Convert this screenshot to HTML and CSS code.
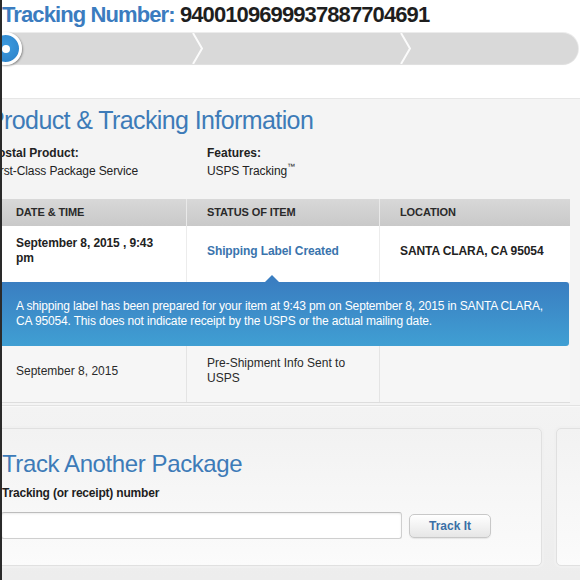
FILE: index.html
```html
<!DOCTYPE html>
<html lang="en">
<head>
<meta charset="utf-8">
<title>USPS Tracking</title>
<link rel="stylesheet" href="styles.css">
</head>
<body>
<div class="page">
  <h1 class="track-head"><span class="track-lbl">Tracking Number:</span> <span class="track-num">9400109699937887704691</span></h1>

  <div class="progress">
    <span class="dot"><span class="dot-core"></span></span>
    <span class="seg seg1"></span>
    <svg class="chev" viewBox="0 0 12 31" width="12" height="31"><polyline points="1,0 10,15.5 1,31" fill="none" stroke="#ffffff" stroke-width="2"/></svg>
    <span class="seg seg2"></span>
    <svg class="chev" viewBox="0 0 12 31" width="12" height="31"><polyline points="1,0 10,15.5 1,31" fill="none" stroke="#ffffff" stroke-width="2"/></svg>
    <span class="seg seg3"></span>
  </div>

  <section class="info">
    <h2 class="info-title">Product &amp; Tracking Information</h2>
    <div class="meta">
      <div class="meta-col meta-product">
        <div class="meta-label">Postal Product:</div>
        <div class="meta-value">First-Class Package Service</div>
      </div>
      <div class="meta-col">
        <div class="meta-label">Features:</div>
        <div class="meta-value">USPS Tracking<sup class="tm">™</sup></div>
      </div>
    </div>

    <div class="table">
      <div class="th">DATE &amp; TIME</div>
      <div class="th">STATUS OF ITEM</div>
      <div class="th">LOCATION</div>

      <div class="td td-strong row1">September 8, 2015 , 9:43 pm</div>
      <div class="td td-strong td-status row1">Shipping Label Created</div>
      <div class="td td-strong row1">SANTA CLARA, CA 95054</div>

      <div class="note">A shipping label has been prepared for your item at 9:43 pm on September 8, 2015 in SANTA CLARA, CA 95054. This does not indicate receipt by the USPS or the actual mailing date.</div>

      <div class="td row2">September 8, 2015</div>
      <div class="td row2">Pre-Shipment Info Sent to USPS</div>
      <div class="td row2"></div>
    </div>
  </section>

  <section class="another">
    <div class="card">
      <h2 class="card-title">Track Another Package</h2>
      <label class="card-label" for="tn">Tracking (or receipt) number</label>
      <div class="form-row">
        <input id="tn" class="tn-input" type="text">
        <button class="track-btn" type="button">Track It</button>
      </div>
    </div>
    <div class="card card-side"></div>
  </section>
</div>
</body>
</html>
```

FILE: styles.css
```css
html, body {
  margin: 0;
  padding: 0;
  background: #ffffff;
}

body {
  font-family: "Liberation Sans", Arial, sans-serif;
  color: #222222;
}

.page {
  border-left: 2px solid #2a2a2a;
  width: 578px;
  height: 580px;
  overflow: hidden;
  background: #ffffff;
}

/* ---------- header ---------- */
.track-head {
  margin: 0;
  padding: 1px 0 0 0;
  height: 32px;
  box-sizing: border-box;
  font-size: 22px;
  line-height: 28px;
  font-weight: bold;
  letter-spacing: -0.9px;
  white-space: nowrap;
}

.track-lbl {
  color: #3b7cbf;
}

.track-num {
  color: #1e1e1e;
}

/* ---------- progress bar ---------- */
.progress {
  display: flex;
  align-items: center;
  height: 31px;
  margin: 1px 2px 0 0;
  background: #d9d9d9;
  border-radius: 0 16px 16px 0;
  box-shadow: 0 1px 1px rgba(0, 0, 0, 0.06), 0 0 0 1px #ececec;
}

.dot {
  flex: none;
  width: 27px;
  height: 27px;
  margin-left: -13px;
  border: 3px solid #ffffff;
  border-radius: 50%;
  background: radial-gradient(circle at 50% 40%, #3c9be0, #2a7fc6);
  box-shadow: 1px 1px 2px rgba(0, 0, 0, 0.35);
  display: flex;
  align-items: center;
  justify-content: center;
}

.dot-core {
  width: 8px;
  height: 8px;
  border-radius: 50%;
  background: #ffffff;
}

.seg {
  height: 100%;
}

.seg1 {
  width: 170px;
}

.seg2 {
  width: 196px;
}

.seg3 {
  flex: 1;
}

.chev {
  flex: none;
  display: block;
  opacity: 0.9;
}

/* ---------- info section ---------- */
.info {
  margin-top: 34px;
  border-top: 1px solid #e6e6e6;
  background: #f4f4f4;
  padding: 6px 0 3px;
  border-bottom: 1px solid #e2e2e2;
}

.info-title {
  margin: 0 0 9px -14px;
  font-size: 25px;
  line-height: 30px;
  font-weight: normal;
  letter-spacing: -0.6px;
  color: #3d7bb8;
  white-space: nowrap;
}

.meta {
  display: flex;
  margin-left: -12px;
  font-size: 12px;
  line-height: 18px;
  color: #222222;
}

.meta-col.meta-product {
  width: 217px;
}

.meta-label {
  font-weight: bold;
}

.meta-value {
  letter-spacing: -0.1px;
}

.tm {
  font-size: 8px;
  line-height: 0;
  vertical-align: 6px;
}

/* ---------- table ---------- */
.table {
  display: grid;
  grid-template-columns: 190px 193px 191px;
  margin: 19px 0 0 -6px;
  width: 574px;
  font-size: 12px;
  line-height: 15px;
}

.th {
  height: 27px;
  box-sizing: border-box;
  padding: 0 20px;
  display: flex;
  align-items: center;
  font-size: 11px;
  font-weight: bold;
  letter-spacing: -0.1px;
  color: #2a2a2a;
  background: linear-gradient(#d8d8d8, #c9c9c9);
  border-left: 1px solid #e9e9e9;
}

.th:first-child {
  border-left: none;
}

.td {
  box-sizing: border-box;
  padding: 10px 20px 16px;
  display: flex;
  align-items: center;
  min-height: 56px;
  border-left: 1px solid #ececec;
}

.row1 {
  background: #ffffff;
}

.row1:nth-child(3n+1) {
  border-left: none;
}

.td-strong {
  font-weight: bold;
  color: #222222;
  letter-spacing: -0.1px;
}

.td-status {
  color: #3a74ad;
}

.row2 {
  background: #f6f6f6;
  color: #2a2a2a;
  border-left: 1px solid #e4e4e4;
  box-shadow: 0 1px 0 #dddddd;
}

.td.row2:nth-child(3n+8) {
  border-left: none;
}

.note {
  grid-column: 1 / 4;
  position: relative;
  margin-left: 4px;
  margin-right: 1px;
  padding: 17px 14px 17px 16px;
  min-height: 64px;
  box-sizing: border-box;
  color: #ffffff;
  letter-spacing: -0.15px;
  background: linear-gradient(#3a7ec1, #409fd3);
  border-radius: 0 3px 3px 0;
}

.note::before {
  content: "";
  position: absolute;
  left: 265px;
  top: -7px;
  border-left: 7px solid transparent;
  border-right: 7px solid transparent;
  border-bottom: 7px solid #3a7ec1;
}

/* ---------- track another ---------- */
.another {
  display: flex;
  gap: 14px;
  padding: 21px 0 0;
  height: 200px;
  box-sizing: border-box;
  background: linear-gradient(#f3f3f3, #ececec);
  border-top: 1px solid #f9f9f9;
}

.card {
  flex: none;
  width: 554px;
  margin-left: -14px;
  box-sizing: border-box;
  height: 138px;
  padding: 21px 0 0 13px;
  border: 1px solid #e0e0e0;
  border-radius: 5px;
  background: linear-gradient(#f2f2f2, #fbfbfb);
  box-shadow: 0 0 0 2px #f0f0f0;
}

.card-side {
  width: 60px;
  margin-left: 0;
  padding: 0;
}

.card-title {
  margin: 0;
  font-size: 24px;
  line-height: 28px;
  font-weight: normal;
  letter-spacing: -0.4px;
  color: #3d7bb8;
  white-space: nowrap;
}

.card-label {
  display: block;
  margin-top: 7px;
  font-size: 12px;
  line-height: 16px;
  font-weight: bold;
  letter-spacing: -0.2px;
  color: #1e1e1e;
}

.form-row {
  display: flex;
  align-items: center;
  gap: 7px;
  margin-top: 11px;
  margin-left: -1px;
}

.tn-input {
  width: 401px;
  height: 27px;
  box-sizing: border-box;
  margin: 0;
  border: 1px solid #cfcfcf;
  border-top-color: #bdbdbd;
  border-radius: 3px;
  background: #ffffff;
  box-shadow: inset 0 1px 2px rgba(0, 0, 0, 0.08);
}

.track-btn {
  width: 82px;
  height: 24px;
  box-sizing: border-box;
  border: 1px solid #c8c8c8;
  border-radius: 5px;
  background: linear-gradient(#ffffff, #e6e6e6);
  font-family: "Liberation Sans", Arial, sans-serif;
  font-size: 12px;
  font-weight: bold;
  color: #3a6fa6;
  padding: 0;
  box-shadow: 0 1px 1px rgba(0, 0, 0, 0.08);
}
```
